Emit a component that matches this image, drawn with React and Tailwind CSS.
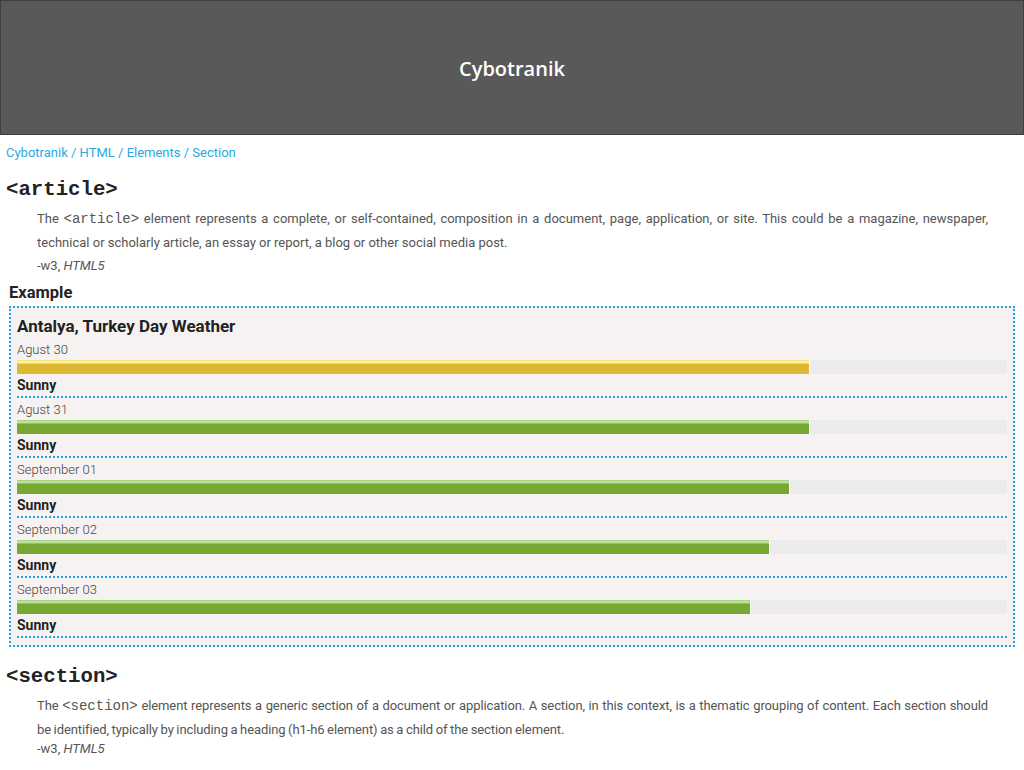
import React from "react";

const days = [
  { d: "Agust 30", w: 80, c: "yellow" },
  { d: "Agust 31", w: 80, c: "green" },
  { d: "September 01", w: 78, c: "green" },
  { d: "September 02", w: 76, c: "green" },
  { d: "September 03", w: 74, c: "green" },
];

const sans = { fontFamily: 'Roboto, "Open Sans", sans-serif' };
const mono = { fontFamily: '"Liberation Mono", "Courier New", monospace' };

function Bar({ w, c }) {
  const fill =
    c === "yellow"
      ? "bg-[linear-gradient(to_bottom,#f6e46a_0px,#fff6b0_2px,#fdf3a0_3px,#dcb832_4px,#dcb832_100%)]"
      : "bg-[linear-gradient(to_bottom,#9fd07a_0px,#c6e7a8_2px,#b3da90_3px,#76a832_4px,#76a832_100%)]";
  return (
    <div className="h-[14px] w-full bg-[#ebebeb]">
      <div className={`h-full ${fill} shadow-[1px_0_0_#ffffff]`} style={{ width: `${w}%` }} />
    </div>
  );
}

export default function App() {
  return (
    <div className="h-[770px] overflow-hidden bg-white" style={sans}>
      <header className="h-[135px] border border-[#3f3f3f] bg-[#595959] flex items-center justify-center">
        <h1
          className="text-white text-[20px] font-semibold mt-[2px]"
          style={{ fontFamily: '"Open Sans", sans-serif' }}
        >
          Cybotranik
        </h1>
      </header>

      <nav className="px-[6px] pt-[8px] text-[13px] leading-[20px] text-[#2aa8e2]">
        <a>Cybotranik</a> <span>/</span> <a>HTML</a> <span>/</span> <a>Elements</a> <span>/</span> <a>Section</a>
      </nav>

      <h2 className="px-[6px] mt-[15px] text-[20.7px] leading-[24px] font-bold text-[#222]" style={mono}>
        &lt;article&gt;
      </h2>
      <div className="pl-[37px] pr-[36px] mt-[5px] text-[13px] leading-[24px] text-[#555] text-justify">
        <p>
          The{" "}
          <code className="text-[14px]" style={mono}>
            &lt;article&gt;
          </code>{" "}
          element represents a complete, or self-contained, composition in a document, page, application, or site. This
          could be a magazine, newspaper, technical or scholarly article, an essay or report, a blog or other social media
          post.
        </p>
        <p className="leading-[22px]">
          -w3, <i>HTML5</i>
        </p>
      </div>

      <h3 className="pl-[9px] mt-[6px] text-[16.5px] leading-[20px] font-bold text-[#222]">Example</h3>

      <div className="mx-[9px] mt-[3px] border-2 border-dotted border-[#1ca5ec] bg-[#f5f2f1] px-[6px] pt-[5px] pb-[7px]">
        <div className="text-[17px] leading-[27px] font-bold text-[#222]">Antalya, Turkey Day Weather</div>
        {days.map((x, i) => (
          <div key={i} className={`border-b-2 border-dotted border-[#1ca5ec] ${i === 0 ? "" : "mt-[2px]"}`}>
            <div className="text-[13px] leading-[20px] font-light text-[#444]">{x.d}</div>
            <Bar w={x.w} c={x.c} />
            <div className="text-[14px] leading-[22px] font-bold text-[#222]">Sunny</div>
          </div>
        ))}
      </div>

      <h2 className="px-[6px] mt-[18px] text-[20.7px] leading-[24px] font-bold text-[#222]" style={mono}>
        &lt;section&gt;
      </h2>
      <div className="pl-[37px] pr-[36px] mt-[5px] text-[13px] leading-[24px] text-[#555] text-justify">
        <p className="tracking-[-0.1px] [word-spacing:-0.5px]">
          The{" "}
          <code className="text-[14px] tracking-normal" style={mono}>
            &lt;section&gt;
          </code>{" "}
          element represents a generic section of a document or application. A section, in this context, is a thematic
          grouping of content. Each section should be&nbsp;identified, typically by including a heading (h1-h6 element) as a
          child of the section element.
        </p>
        <p className="leading-[14px]">
          -w3, <i>HTML5</i>
        </p>
      </div>
    </div>
  );
}
